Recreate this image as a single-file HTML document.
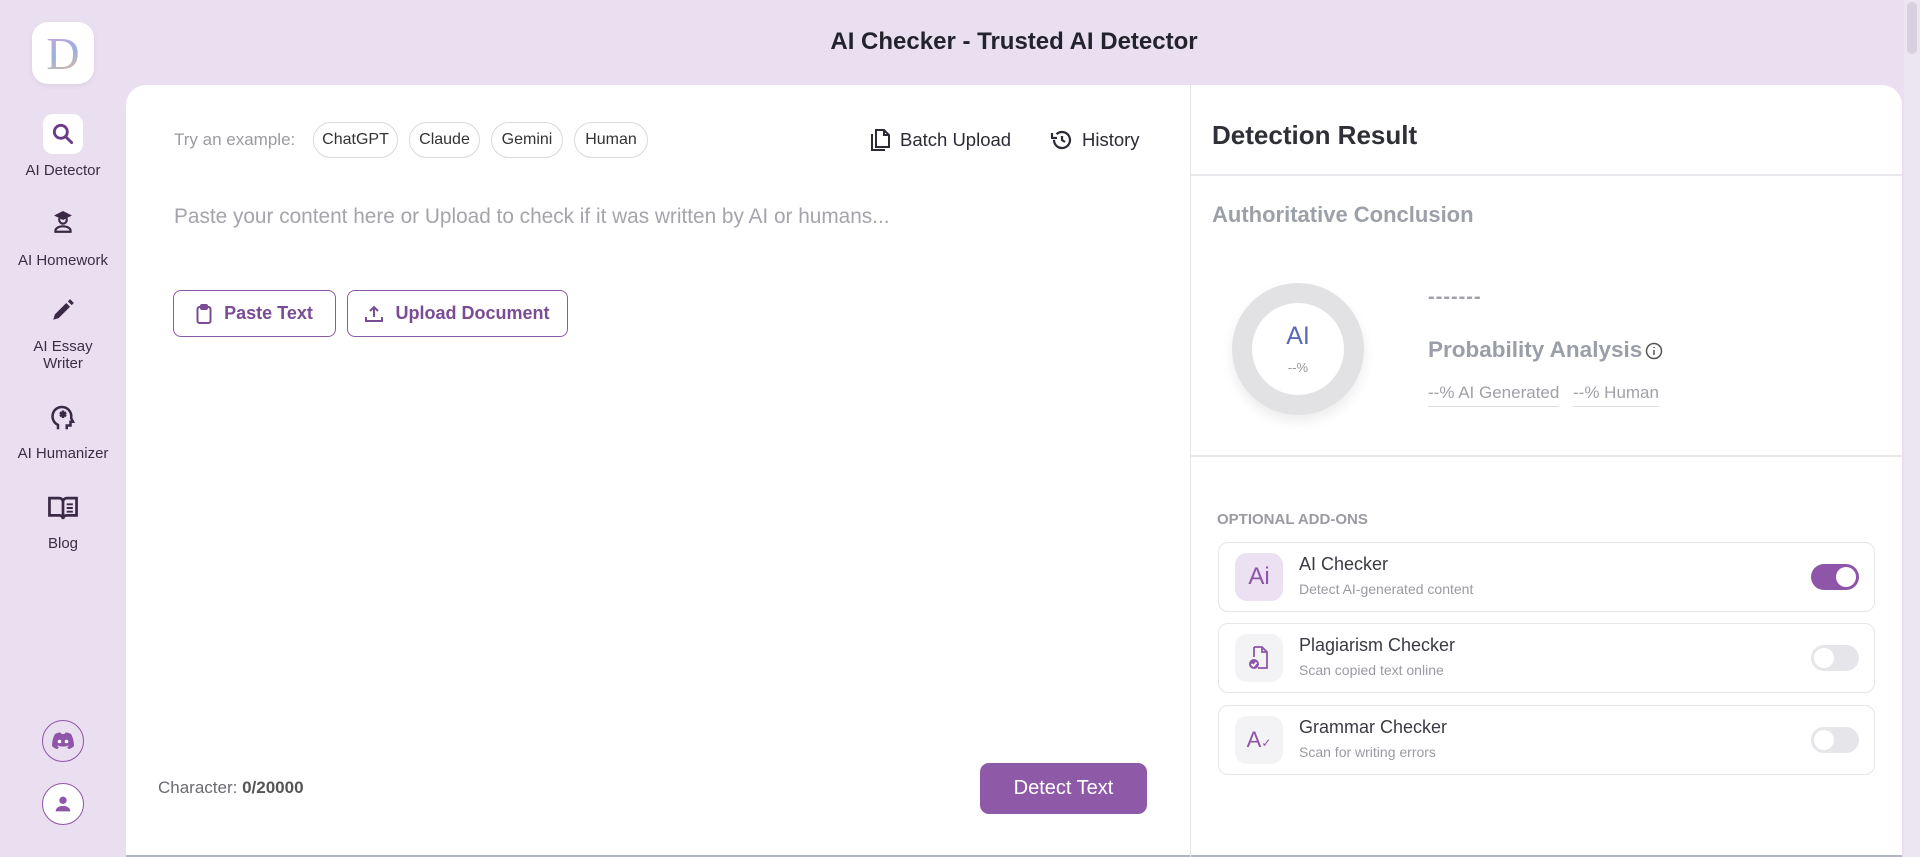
<!DOCTYPE html>
<html><head><meta charset="utf-8"><style>
*{box-sizing:border-box;margin:0;padding:0}
body{width:1920px;height:857px;overflow:hidden;background:#e9dff0;font-family:"Liberation Sans",sans-serif;position:relative;color:#2b2b35}
.abs{position:absolute}
.title{left:126px;right:18px;top:28px;text-align:center;font-size:24px;font-weight:bold;color:#23232e}
.logo{left:32px;top:22px;width:62px;height:62px;background:#fff;border-radius:16px;display:flex;align-items:center;justify-content:center;box-shadow:0 2px 6px rgba(0,0,0,.06)}
.logo span{font-family:"Liberation Serif",serif;font-size:46px;background:linear-gradient(160deg,#d8a0d8,#9ab0e0 50%,#f0c080);-webkit-background-clip:text;background-clip:text;color:transparent}
.nav{left:0;width:126px;text-align:center;font-size:15px;color:#3a2e45}
.navic{position:absolute;left:43px;width:40px;height:40px;display:flex;align-items:center;justify-content:center}
.card{left:126px;top:85px;width:1776px;height:772px;background:#fff;border-radius:20px 20px 0 0;border-bottom:2px solid #b0b6c0}
.vdiv{left:1190px;top:85px;width:1px;height:772px;background:#e5e5ea}
.chip{top:122px;height:36px;border:1px solid #d8d8de;border-radius:18px;font-size:16px;display:flex;align-items:center;justify-content:center;color:#333}
.btn{top:290px;height:47px;border:1.5px solid #8a5aa5;border-radius:8px;color:#7a4c95;font-size:18px;font-weight:bold;display:flex;align-items:center;justify-content:center;gap:12px}
.hline{height:2px;background:#e8e8ec}
.addon{left:1218px;width:657px;height:70px;border:1px solid #e6e6ea;border-radius:10px}
.aic{position:absolute;left:16px;top:10px;width:48px;height:48px;border-radius:12px;background:#f3f2f5;display:flex;align-items:center;justify-content:center}
.at{position:absolute;left:80px;top:11px;font-size:18px;color:#3a3a44}
.as{position:absolute;left:80px;top:38px;font-size:14px;color:#9a9aa2}
.tg{position:absolute;left:592px;top:21px;width:48px;height:26px;border-radius:13px;background:#e6e6ea}
.tg::after{content:"";position:absolute;left:3px;top:3px;width:20px;height:20px;border-radius:50%;background:#fff}
.tg.on{background:#8e55a8}.tg.on::after{left:25px}
</style></head><body>
<div class="abs title">AI Checker - Trusted AI Detector</div>
<div class="abs logo"><span>D</span></div>
<div class="abs" style="left:1904px;top:0;width:16px;height:857px;background:#ece6f0"></div>
<div class="abs" style="left:1907px;top:2px;width:10px;height:52px;border-radius:5px;background:#d8d0de"></div>

<div class="navic" style="top:114px;background:#fff;border-radius:10px"><svg width="26" height="26" viewBox="0 0 24 24" fill="none" stroke="#6b3a88" stroke-width="2.6"><circle cx="10" cy="10" r="6"/><path d="M14.5 14.5L20 20" stroke-linecap="round"/></svg></div>
<div class="abs nav" style="top:162px">AI Detector</div>
<div class="navic" style="top:202px"><svg width="26" height="26" viewBox="0 0 24 24" fill="none" stroke="#3a2845" stroke-width="2"><path d="M6 6l6-3 6 3-6 3z" fill="#3a2845"/><circle cx="12" cy="10" r="3.5"/><path d="M5 21v-1a7 4 0 0 1 14 0v1z"/></svg></div>
<div class="abs nav" style="top:252px">AI Homework</div>
<div class="navic" style="top:290px"><svg width="26" height="26" viewBox="0 0 24 24"><path d="M3 21l1.5-5L15 5.5l3.5 3.5L8 19.5z M16.5 4l2-2 3.5 3.5-2 2z" fill="#3a2845"/></svg></div>
<div class="abs nav" style="top:338px">AI Essay<br>Writer</div>
<div class="navic" style="top:398px"><svg width="30" height="30" viewBox="0 0 24 24" fill="none" stroke="#3a2845" stroke-width="2"><path d="M8 21v-3.5A7.5 7.5 0 1 1 18.5 12l1.5 3h-2v3h-3v3"/><path d="M12 6v6M9.5 7.5l5 3M14.5 7.5l-5 3"/></svg></div>
<div class="abs nav" style="top:445px">AI Humanizer</div>
<div class="navic" style="top:488px"><svg width="32" height="28" viewBox="0 0 26 22" fill="none" stroke="#3a2845" stroke-width="2.2"><path d="M2 3h8a3 3 0 0 1 3 3v14a3 3 0 0 0-3-3H2zM24 3h-8a3 3 0 0 0-3 3v14a3 3 0 0 1 3-3h8z"/><path d="M16 8h5M16 11h5M16 14h5" stroke-width="1.6"/></svg></div>
<div class="abs nav" style="top:535px">Blog</div>
<div class="abs" style="left:42px;top:720px;width:42px;height:42px;border:1.5px solid #8e55a8;border-radius:50%;display:flex;align-items:center;justify-content:center"><svg width="24" height="18" viewBox="0 0 24 18"><path d="M4 2c3-1.5 5-2 6-1l.5 1h3l.5-1c1-1 3-.5 6 1 2 3.5 3 8 3 12-2 2-4 3-5.5 3l-1.5-2 2-1-1-.5c-3 1.5-7 1.5-10 0l-1 .5 2 1L6.5 17C5 17 3 16 1 14c0-4 1-8.5 3-12z" fill="#8e55a8"/><circle cx="8.5" cy="9.5" r="1.8" fill="#fff"/><circle cx="15.5" cy="9.5" r="1.8" fill="#fff"/></svg></div>
<div class="abs" style="left:42px;top:783px;width:42px;height:42px;border:1.5px solid #8e55a8;border-radius:50%;background:#fff;display:flex;align-items:center;justify-content:center"><svg width="22" height="22" viewBox="0 0 24 24" fill="#8e55a8"><circle cx="12" cy="8" r="4"/><path d="M4 20c0-4 4-6 8-6s8 2 8 6z"/></svg></div>

<div class="abs card"></div>
<div class="abs vdiv"></div>

<div class="abs" style="left:174px;top:130px;font-size:17px;color:#9a9aa2">Try an example:</div>
<div class="abs chip" style="left:313px;width:85px">ChatGPT</div>
<div class="abs chip" style="left:409px;width:71px">Claude</div>
<div class="abs chip" style="left:491px;width:72px">Gemini</div>
<div class="abs chip" style="left:574px;width:74px">Human</div>
<div class="abs" style="left:870px;top:128px;display:flex;align-items:center;gap:8px;font-size:18.5px;color:#2b2b35"><svg width="22" height="24" viewBox="0 0 22 24" fill="none" stroke="#2b2b35" stroke-width="2"><path d="M2 6v16h13"/><path d="M6 2h8l5 5v12H6z"/><path d="M14 2v5h5"/></svg>Batch Upload</div>
<div class="abs" style="left:1050px;top:128px;display:flex;align-items:center;gap:8px;font-size:18.5px;color:#2b2b35"><svg width="24" height="24" viewBox="0 0 24 24" fill="none" stroke="#2b2b35" stroke-width="2.2"><path d="M4 12a8 8 0 1 0 2.5-5.8"/><path d="M2 5v5h5" stroke-linejoin="round"/><path d="M12 8v4l3 2"/></svg>History</div>
<div class="abs" style="left:174px;top:205px;font-size:20.8px;color:#a4a4ac">Paste your content here or Upload to check if it was written by AI or humans...</div>
<div class="abs btn" style="left:173px;width:163px"><svg width="16" height="20" viewBox="0 0 16 20" fill="none" stroke="#7a4c95" stroke-width="2"><rect x="1.5" y="3" width="13" height="16" rx="2"/><rect x="5" y="1" width="6" height="4" rx="1"/></svg>Paste Text</div>
<div class="abs btn" style="left:347px;width:221px"><svg width="18" height="18" viewBox="0 0 18 18" fill="none" stroke="#7a4c95" stroke-width="2"><path d="M9 12V2M5 6l4-4 4 4M1 12v4h16v-4"/></svg>Upload Document</div>
<div class="abs" style="left:158px;top:778px;font-size:17px;color:#6a6a72">Character: <b style="color:#555">0/20000</b></div>
<div class="abs" style="left:980px;top:763px;width:167px;height:51px;background:#8e5aa8;border-radius:9px;color:#fff;font-size:20px;display:flex;align-items:center;justify-content:center">Detect Text</div>

<div class="abs" style="left:1212px;top:120px;font-size:26px;font-weight:bold;color:#2f2f38">Detection Result</div>
<div class="abs hline" style="left:1190px;top:174px;width:712px"></div>
<div class="abs" style="left:1212px;top:202px;font-size:22px;font-weight:bold;color:#9ca0a8">Authoritative Conclusion</div>
<div class="abs" style="left:1232px;top:283px;width:132px;height:132px;border-radius:50%;background:#e2e2e4;box-shadow:0 6px 12px rgba(0,0,0,.08)"></div>
<div class="abs" style="left:1252px;top:303px;width:92px;height:92px;border-radius:50%;background:#fff"></div>
<div class="abs" style="left:1252px;top:322px;width:92px;text-align:center;font-size:25px;color:#5a6ab8">AI</div>
<div class="abs" style="left:1252px;top:360px;width:92px;text-align:center;font-size:13px;color:#999">--%</div>
<div class="abs" style="left:1428px;top:286px;font-size:20px;font-weight:bold;color:#a0a0a8;letter-spacing:1px">-------</div>
<div class="abs" style="left:1428px;top:337px;font-size:22.5px;font-weight:bold;color:#9a9ea8">Probability Analysis</div>
<svg class="abs" style="left:1645px;top:342px" width="18" height="18" viewBox="0 0 18 18" fill="none" stroke="#555" stroke-width="1.5"><circle cx="9" cy="9" r="7.5"/><path d="M9 8v5M9 5v1"/></svg>
<div class="abs" style="left:1428px;top:383px;font-size:17px;color:#a0a0a8;border-bottom:1px solid #ddd;padding-bottom:3px">--% AI Generated</div>
<div class="abs" style="left:1573px;top:383px;font-size:17px;color:#a0a0a8;border-bottom:1px solid #ddd;padding-bottom:3px">--% Human</div>
<div class="abs hline" style="left:1190px;top:455px;width:712px"></div>
<div class="abs" style="left:1217px;top:511px;font-size:15px;font-weight:bold;color:#9a9aa2">OPTIONAL ADD-ONS</div>

<div class="abs addon" style="top:542px"><div class="aic" style="background:#ece1f2"><span style="font-size:24px;color:#8e55a8">Ai</span></div><div class="at">AI Checker</div><div class="as">Detect AI-generated content</div><div class="tg on"></div></div>
<div class="abs addon" style="top:623px"><div class="aic"><svg width="22" height="26" viewBox="0 0 22 26" fill="none" stroke="#8e55a8" stroke-width="1.8"><path d="M6 2h8l5 5v16H10M6 2v10M14 2v5h5"/><circle cx="6" cy="19" r="5" fill="#8e55a8" stroke="none"/><path d="M3.5 19l2 2 3-3.5" stroke="#fff"/></svg></div><div class="at">Plagiarism Checker</div><div class="as">Scan copied text online</div><div class="tg"></div></div>
<div class="abs addon" style="top:705px"><div class="aic"><span style="font-size:22px;color:#8e55a8">A<span style="font-size:12px">✓</span></span></div><div class="at">Grammar Checker</div><div class="as">Scan for writing errors</div><div class="tg"></div></div>
</body></html>
